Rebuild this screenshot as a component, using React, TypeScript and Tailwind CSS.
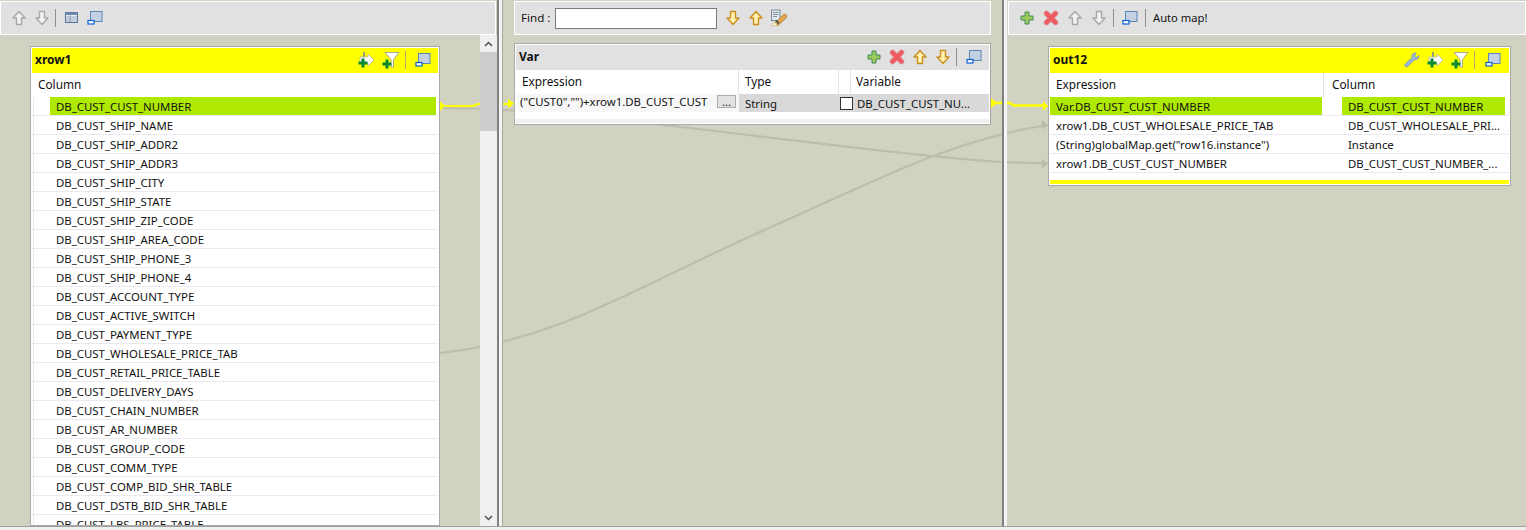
import React from 'react';

const FONT = "font-['Noto_Sans','Open_Sans',sans-serif]";

const leftRows = [
  'DB_CUST_CUST_NUMBER',
  'DB_CUST_SHIP_NAME',
  'DB_CUST_SHIP_ADDR2',
  'DB_CUST_SHIP_ADDR3',
  'DB_CUST_SHIP_CITY',
  'DB_CUST_SHIP_STATE',
  'DB_CUST_SHIP_ZIP_CODE',
  'DB_CUST_SHIP_AREA_CODE',
  'DB_CUST_SHIP_PHONE_3',
  'DB_CUST_SHIP_PHONE_4',
  'DB_CUST_ACCOUNT_TYPE',
  'DB_CUST_ACTIVE_SWITCH',
  'DB_CUST_PAYMENT_TYPE',
  'DB_CUST_WHOLESALE_PRICE_TAB',
  'DB_CUST_RETAIL_PRICE_TABLE',
  'DB_CUST_DELIVERY_DAYS',
  'DB_CUST_CHAIN_NUMBER',
  'DB_CUST_AR_NUMBER',
  'DB_CUST_GROUP_CODE',
  'DB_CUST_COMM_TYPE',
  'DB_CUST_COMP_BID_SHR_TABLE',
  'DB_CUST_DSTB_BID_SHR_TABLE',
  'DB_CUST_LBS_PRICE_TABLE',
];

const outRows = [
  ['Var.DB_CUST_CUST_NUMBER', 'DB_CUST_CUST_NUMBER'],
  ['xrow1.DB_CUST_WHOLESALE_PRICE_TAB', 'DB_CUST_WHOLESALE_PRI...'],
  ['(String)globalMap.get("row16.instance")', 'Instance'],
  ['xrow1.DB_CUST_CUST_NUMBER', 'DB_CUST_CUST_NUMBER_...'],
];

const UpArrow = ({ on }: { on?: boolean }) => (
  <svg width="16" height="16" viewBox="0 0 16 16">
    <path
      d="M8 1.500 14 8H10.500V14.500H5.500V8H2Z"
      fill={on ? '#fff0b0' : '#f3f3f3'}
      stroke={on ? '#c8901e' : '#a8a8a8'}
      strokeWidth="1.400"
      strokeLinejoin="round"
    />
  </svg>
);

const DownArrow = ({ on }: { on?: boolean }) => (
  <svg width="16" height="16" viewBox="0 0 16 16">
    <path
      d="M8 14.500 14 8H10.500V1.500H5.500V8H2Z"
      fill={on ? '#fff0b0' : '#f3f3f3'}
      stroke={on ? '#c8901e' : '#a8a8a8'}
      strokeWidth="1.400"
      strokeLinejoin="round"
    />
  </svg>
);

const PlusIcon = () => (
  <svg width="16" height="16" viewBox="0 0 16 16">
    <path d="M6 2h4v4h4v4h-4v4H6v-4H2V6h4Z" fill="#9ccb5c" stroke="#3f8a5a" strokeWidth="1" />
  </svg>
);

const DeleteIcon = () => (
  <svg width="16" height="16" viewBox="0 0 16 16" fill="none">
    <path d="M3.500 3.500 12.500 12.500M12.500 3.500 3.500 12.500" stroke="#dc8a8c" strokeWidth="5.500" strokeLinecap="round" />
    <path d="M3.500 3.500 12.500 12.500M12.500 3.500 3.500 12.500" stroke="#ee5a60" strokeWidth="3.800" strokeLinecap="round" />
  </svg>
);

const WindowIcon = () => (
  <svg width="16" height="16" viewBox="0 0 16 16">
    <rect x="3.500" y="1.500" width="11.500" height="10" fill="#c3d1e2" stroke="#5b86b8" />
    <rect x="1" y="10.500" width="6" height="3.500" fill="#fff" stroke="#0d5fd0" strokeWidth="1.200" />
  </svg>
);

const TableIcon = () => (
  <svg width="16" height="16" viewBox="0 0 16 16">
    <rect x="1.500" y="2.500" width="12" height="10" fill="#eef2f8" stroke="#5d7599" />
    <rect x="1.500" y="2.500" width="12" height="2.500" fill="#6f89ad" />
    <path d="M2 7h11M2 9h11M2 11h11M6 5v7" stroke="#8096b5" strokeWidth="0.800" />
  </svg>
);

const AddInputIcon = () => (
  <svg width="18" height="18" viewBox="0 0 18 18">
    <path d="M6 1v5" stroke="#9a9a80" strokeWidth="2" />
    <path d="M2 6h8V3l6 6-6 6v-3H2Z" fill="#fff" stroke="#b5b5a0" strokeWidth="0.800" />
    <path d="M3.500 7.500h3v3h3v3h-3v3h-3v-3h-3v-3h3Z" fill="#0a8a32" />
  </svg>
);

const AddFilterIcon = () => (
  <svg width="18" height="18" viewBox="0 0 18 18">
    <path d="M3 1.500h14L11.500 8.500V16H9V8.500Z" fill="#fff" stroke="#a9a98c" strokeWidth="1" />
    <path d="M3.500 8.500h3v3h3v3h-3v3h-3v-3h-3v-3h3Z" fill="#0a8a32" />
  </svg>
);

const WrenchIcon = () => (
  <svg width="16" height="16" viewBox="0 0 16 16">
    <path
      d="M15 3.500 12.500 5.500 10.500 4 12 1.200C10 .6 8 1.800 8 4c0 .6.1 1 .3 1.400L1.500 11.800c-.9.9-.9 1.900-.2 2.600s1.800.7 2.600-.1L10.300 7.700C12.700 8.300 15.200 6.200 15 3.500Z"
      fill="#9db8dc"
      stroke="#6d8fbd"
      strokeWidth="0.800"
    />
  </svg>
);

const FindIcon = () => (
  <svg width="18" height="18" viewBox="0 0 18 18">
    <rect x="1.500" y="1" width="8.500" height="10.500" fill="#dfe8f0" stroke="#7d8a96" />
    <path d="M3 3.500h5.500M3 5.500h5.500M3 7.500h4" stroke="#6a7886" strokeWidth="0.800" />
    <path d="M4 15 13 6c1-1 3-1 3.500 0s.5 2-.5 3L8 16.500Z" fill="#e0a850" stroke="#b07a28" strokeWidth="0.800" />
    <path d="M1.500 17 4 13l3.500 3Z" fill="#fff6c8" stroke="#b8a870" strokeWidth="0.500" />
    <path d="M6 11.500l3 3" stroke="#555" strokeWidth="2" />
  </svg>
);

const Slot = ({ w = 'w-[23px]', children }: { w?: string; children: React.ReactNode }) => (
  <div className={`${w} flex shrink-0 items-center justify-center`}>{children}</div>
);

const Sep = ({ tint }: { tint?: boolean }) => (
  <div className={`mx-[2px] h-[18px] w-px shrink-0 ${tint ? 'bg-[#b0b060]' : 'bg-[#8f8f8f]'}`} />
);

const Toolbar = ({ className, children }: { className: string; children: React.ReactNode }) => (
  <div className={`mt-px flex h-[34px] shrink-0 items-center border border-white bg-[#e1e1e1] ${className}`}>
    {children}
  </div>
);

const LinkLayer = () => (
  <svg className="absolute left-0 top-0 z-0" width="1526" height="526" viewBox="0 0 1526 526" fill="none">
    <path d="M440 353C560 340 640 285 760 232S950 140 1048 125" stroke="#bdbdae" strokeWidth="2.200" />
    <path d="M440 108C520 108 600 118 673 126S900 155 1000 162L1048 163.500" stroke="#bdbdae" strokeWidth="2.200" />
    <path d="M1042 120l6 5-6 5Z" fill="#bdbdae" />
    <path d="M1042 158.500l6 5-6 5Z" fill="#bdbdae" />
    <path d="M445 106H473L478 104H510" stroke="#ffff00" strokeWidth="2" />
    <path d="M440 101l5 5-5 5Z" fill="#ffff00" />
    <path d="M508 98.500l6 5-6 5Z" fill="#ffff00" />
    <path d="M996 103H1010L1014 105.500H1044" stroke="#ffff00" strokeWidth="2.500" />
    <path d="M991 98l6 5-6 5Z" fill="#ffff00" />
    <path d="M1043 101l5 5-5 5Z" fill="#ffff00" />
  </svg>
);

const LeftTable = () => (
  <div className="relative z-10 ml-[30px] mt-[11px] w-[410px] flex-1 overflow-hidden border border-[#a9a9a9] bg-white p-px">
    <div className="flex h-[25px] items-center bg-[#ffff00] pb-[2px] pl-[3px]">
      <span className="flex-1 text-[12px] font-bold text-[#101010]">xrow1</span>
      <Slot w="w-[24px]"><AddInputIcon /></Slot>
      <Slot w="w-[24px]"><AddFilterIcon /></Slot>
      <Sep tint />
      <Slot w="w-[30px]"><WindowIcon /></Slot>
    </div>
    <div className="flex h-[24px] items-center pl-[6px] text-[11.8px] text-[#111]">Column</div>
    {leftRows.map((name, i) => (
      <div key={name} className="flex h-[19px] border-b border-[#e9e9ef] pr-[2px] text-[11.4px] text-[#111]">
        <div className="ml-px w-[17px] border-l border-[#e9e9ef]" />
        <div className={`flex flex-1 items-center pl-[6px] pt-px ${i === 0 ? 'bg-[#afe800]' : ''}`}>{name}</div>
      </div>
    ))}
  </div>
);

const Scrollbar = () => (
  <div className="relative z-10 flex w-[17px] shrink-0 flex-col bg-[#f0f0f0]">
    <div className="flex h-[17px] items-center justify-center">
      <svg width="9" height="6" viewBox="0 0 9 6" fill="none">
        <path d="M1 5 4.500 1.500 8 5" stroke="#505050" strokeWidth="1.500" />
      </svg>
    </div>
    <div className="h-[79px] bg-[#cdcdcd]" />
    <div className="flex-1" />
    <div className="flex h-[17px] items-center justify-center">
      <svg width="9" height="6" viewBox="0 0 9 6" fill="none">
        <path d="M1 1 4.500 4.500 8 1" stroke="#505050" strokeWidth="1.500" />
      </svg>
    </div>
  </div>
);

const VarPanel = () => (
  <div className="relative z-10 ml-[11px] mr-[11px] mt-[8px] h-[82px] border border-[#a9a9a9] bg-white p-px text-[11.4px] text-[#111]">
    <div className="flex h-[25px] items-center bg-[#e1e1e1] pb-[2px] pl-[3px]">
      <span className="flex-1 text-[12px] font-bold">Var</span>
      <Slot><PlusIcon /></Slot>
      <Slot><DeleteIcon /></Slot>
      <Slot><UpArrow on /></Slot>
      <Slot><DownArrow on /></Slot>
      <Sep />
      <Slot w="w-[30px]"><WindowIcon /></Slot>
    </div>
    <div className="flex h-[24px] items-center text-[11.8px]">
      <div className="flex h-full w-[223px] items-center border-r border-[#e4e4e4] pl-[6px]">Expression</div>
      <div className="flex h-full w-[100px] items-center border-r border-[#e4e4e4] pl-[6px]">Type</div>
      <div className="h-full w-[12px] border-r border-[#e4e4e4]" />
      <div className="flex h-full flex-1 items-center pl-[5px]">Variable</div>
    </div>
    <div className="flex h-[18px] items-center">
      <div className="flex h-full w-[223px] items-center bg-[#f7f7f7] pl-[4px]">
        <span className="mb-[2px] flex-1 whitespace-nowrap">("CUST0","")+xrow1.DB_CUST_CUST</span>
        <div className="mb-[3px] mr-[3px] flex h-[13px] w-[19px] items-center justify-center border border-[#adadad] bg-[#e1e1e1] text-[11px] leading-none">...</div>
      </div>
      <div className="flex h-full w-[100px] items-center bg-[#d9d9d9] pl-[6px] pt-px">String</div>
      <div className="flex h-full w-[14px] items-center justify-center bg-[#d9d9d9]">
        <div className="h-[13px] w-[13px] border border-[#333] bg-white" />
      </div>
      <div className="flex h-full flex-1 items-center bg-[#d9d9d9] pl-[4px] pt-px">DB_CUST_CUST_NU...</div>
    </div>
    <div className="h-[7px]" />
    <div className="h-[4px] bg-[#f0f0f0]" />
  </div>
);

const OutPanel = () => (
  <div className="relative z-10 ml-[41px] mr-[15px] mt-[11px] h-[140px] border border-[#a9a9a9] bg-white p-px text-[11.4px] text-[#111]">
    <div className="flex h-[25px] items-center bg-[#ffff00] pb-[2px] pl-[3px]">
      <span className="flex-1 text-[12px] font-bold">out12</span>
      <Slot w="w-[24px]"><WrenchIcon /></Slot>
      <Slot w="w-[24px]"><AddInputIcon /></Slot>
      <Slot w="w-[24px]"><AddFilterIcon /></Slot>
      <Sep tint />
      <Slot w="w-[32px]"><WindowIcon /></Slot>
    </div>
    <div className="flex h-[24px] items-center text-[11.8px]">
      <div className="flex h-full w-[274px] items-center border-r border-[#e4e4e4] pl-[6px]">Expression</div>
      <div className="flex h-full flex-1 items-center pl-[8px]">Column</div>
    </div>
    {outRows.map((row, i) => (
      <div key={row[0]} className="flex h-[19px] border-b border-[#e9e9ef]">
        <div className={`flex w-[272px] items-center pl-[6px] pt-px ${i === 0 ? 'bg-[#afe800]' : ''}`}>{row[0]}</div>
        <div className="w-[20px]" />
        <div className={`flex w-[163px] items-center whitespace-nowrap pl-[6px] pt-px ${i === 0 ? 'bg-[#afe800]' : ''}`}>{row[1]}</div>
      </div>
    ))}
    <div className="h-[7px]" />
    <div className="h-[4px] bg-[#ffff00]" />
  </div>
);

export default function App() {
  return (
    <div className={`h-[530px] w-[1526px] overflow-hidden bg-[#f0f0f0] ${FONT}`}>
      <div className="relative flex h-[526px] bg-[#d2d2c3]">
        <LinkLayer />
        {/* input side */}
        <div className="flex w-[497px] shrink-0 flex-col">
          <Toolbar className="relative z-10 mr-px pl-[6px]">
            <Slot><UpArrow /></Slot>
            <Slot><DownArrow /></Slot>
            <Sep />
            <Slot w="w-[28px]"><TableIcon /></Slot>
            <Slot w="w-[18px]"><WindowIcon /></Slot>
          </Toolbar>
          <div className="flex min-h-0 flex-1">
            <div className="flex min-w-0 flex-1 flex-col">
              <LeftTable />
            </div>
            <Scrollbar />
          </div>
        </div>
        <div className="relative z-10 w-[2px] shrink-0 bg-[#808080]" />
        <div className="relative z-10 w-[3px] shrink-0 bg-[#f4f4f4]" />
        <div className="relative z-10 w-px shrink-0 bg-[#a8a8a0]" />
        {/* var side */}
        <div className="flex w-[499px] shrink-0 flex-col">
          <Toolbar className="relative z-10 ml-[11px] mr-[11px] text-[11.6px] text-[#111]">
            <span className="ml-[6px] w-[34px]">Find :</span>
            <div className="h-[21px] w-[162px] border border-[#7a7a7a] bg-white" />
            <div className="w-[4px]" />
            <Slot><DownArrow on /></Slot>
            <Slot><UpArrow on /></Slot>
            <Slot><FindIcon /></Slot>
          </Toolbar>
          <VarPanel />
        </div>
        <div className="relative z-10 w-[2px] shrink-0 bg-[#808080]" />
        <div className="relative z-10 w-[3px] shrink-0 bg-[#f4f4f4]" />
        {/* output side */}
        <div className="flex min-w-0 flex-1 flex-col">
          <Toolbar className="relative z-10 ml-px pl-[6px] text-[11.2px] text-[#111]">
            <Slot w="w-[24px]"><PlusIcon /></Slot>
            <Slot w="w-[24px]"><DeleteIcon /></Slot>
            <Slot w="w-[24px]"><UpArrow /></Slot>
            <Slot w="w-[24px]"><DownArrow /></Slot>
            <Sep />
            <Slot w="w-[27px]"><WindowIcon /></Slot>
            <Sep />
            <span className="ml-[5px]">Auto map!</span>
          </Toolbar>
          <OutPanel />
        </div>
      </div>
      <div className="h-px bg-[#a0a0a0]" />
    </div>
  );
}
